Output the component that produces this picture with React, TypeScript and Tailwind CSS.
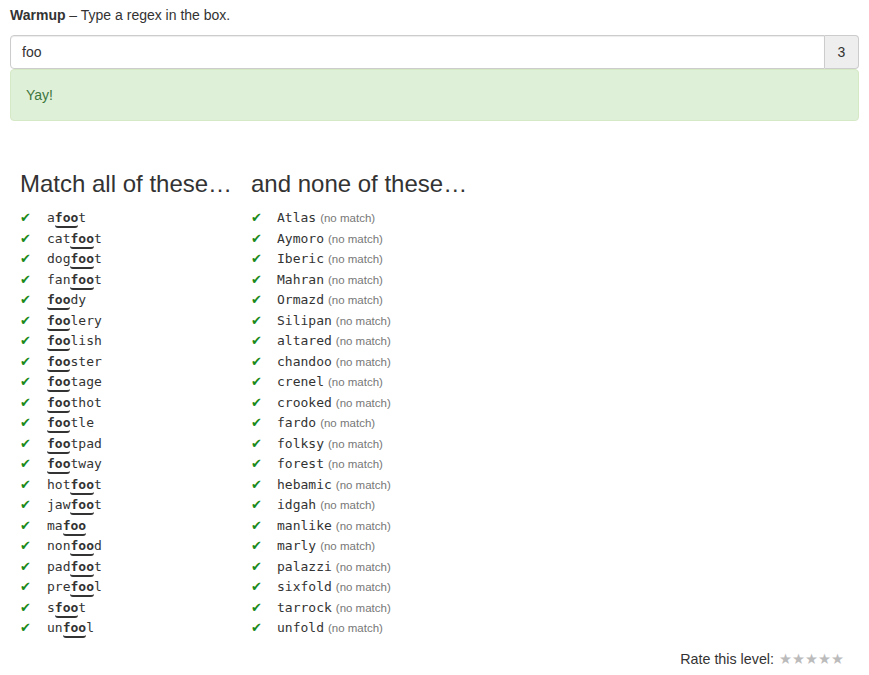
const matches: [string, string, string][] = [
  ['a', 'foo', 't'],
  ['cat', 'foo', 't'],
  ['dog', 'foo', 't'],
  ['fan', 'foo', 't'],
  ['', 'foo', 'dy'],
  ['', 'foo', 'lery'],
  ['', 'foo', 'lish'],
  ['', 'foo', 'ster'],
  ['', 'foo', 'tage'],
  ['', 'foo', 'thot'],
  ['', 'foo', 'tle'],
  ['', 'foo', 'tpad'],
  ['', 'foo', 'tway'],
  ['hot', 'foo', 't'],
  ['jaw', 'foo', 't'],
  ['ma', 'foo', ''],
  ['non', 'foo', 'd'],
  ['pad', 'foo', 't'],
  ['pre', 'foo', 'l'],
  ['s', 'foo', 't'],
  ['un', 'foo', 'l'],
];

const nonMatches = [
  'Atlas', 'Aymoro', 'Iberic', 'Mahran', 'Ormazd', 'Silipan', 'altared', 'chandoo',
  'crenel', 'crooked', 'fardo', 'folksy', 'forest', 'hebamic', 'idgah', 'manlike',
  'marly', 'palazzi', 'sixfold', 'tarrock', 'unfold',
];

const mono = "font-['DejaVu_Sans_Mono',monospace] text-[13px] text-[#333]";

const Check = ({ w }: { w: string }) => (
  <span className={`${w} shrink-0 text-[13px] text-[#1a8a1a] font-['DejaVu_Sans',sans-serif]`}>✔</span>
);

export default function App() {
  return (
    <div className="bg-white min-h-[675px] px-[10px] pt-[5px] font-['Liberation_Sans',Arial,sans-serif] text-[14px] leading-[20px] text-[#333]">
      <p className="mb-[10px]">
        <b>Warmup</b> – Type a regex in the box.
      </p>

      {/* Regex input */}
      <div className="flex h-[34px]">
        <div className="flex-1 flex items-center px-[11px] border border-[#ccc] rounded-l-[4px] shadow-[inset_0_1px_1px_rgba(0,0,0,0.075)]">
          foo
        </div>
        <div className="w-[34px] flex items-center justify-center bg-[#eee] border border-l-0 border-[#ccc] rounded-r-[4px]">
          3
        </div>
      </div>

      <div className="mb-[50px] px-[15px] pt-[15px] h-[52px] bg-[#dff0d8] border border-[#d6e9c6] text-[#3c763d] rounded-[4px]">
        Yay!
      </div>

      <div className="flex pl-[10px]">
        <div className="w-[231px]">
          <h3 className="text-[24px] leading-[26px] mb-[11px]">Match all of these…</h3>
          <ul>
            {matches.map(([pre, hit, post]) => (
              <li key={pre + hit + post} className="flex items-center h-[20.5px]">
                <Check w="w-[27px]" />
                <span className={mono}>
                  {pre}
                  <span className="inline-block font-bold leading-[17px] border-b-2 border-[#333] rounded-b-[3px]">
                    {hit}
                  </span>
                  {post}
                </span>
              </li>
            ))}
          </ul>
        </div>
        <div>
          <h3 className="text-[24px] leading-[26px] mb-[11px]">and none of these…</h3>
          <ul>
            {nonMatches.map((w) => (
              <li key={w} className="flex items-center h-[20.5px]">
                <Check w="w-[26px]" />
                <span className={mono}>{w}</span>
                <span className="ml-[4px] text-[11.5px] text-[#777]">(no match)</span>
              </li>
            ))}
          </ul>
        </div>
      </div>

      <div className="flex justify-end items-center mt-[10px] pr-[15px]">
        <span className="text-[14.3px]">Rate this level:</span>
        <span className="ml-[5px] text-[14.5px] text-[#bbb] font-['DejaVu_Sans',sans-serif]">★★★★★</span>
      </div>
    </div>
  );
}
